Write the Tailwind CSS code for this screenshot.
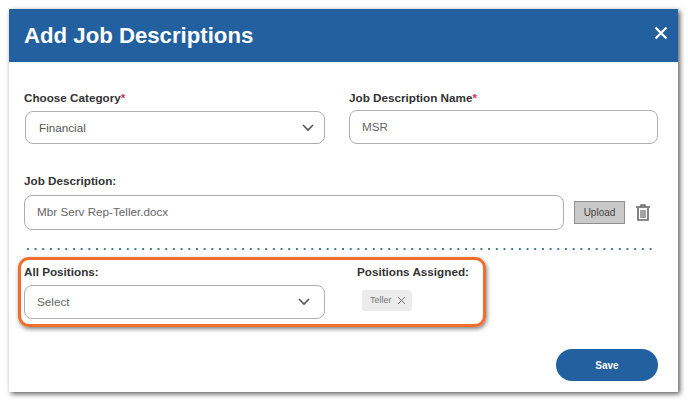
<!DOCTYPE html>
<html>
<head>
<script src="https://cdn.jsdelivr.net/npm/@tailwindcss/browser@4"></script>
</head>
<body class="bg-white font-['Liberation_Sans',Arial,sans-serif]">
<div class="w-[688px] h-[402px] pt-[9px] pl-[9px] overflow-hidden">
  <div class="relative w-[669px] h-[383px] bg-white flex flex-col shadow-[2px_2px_5px_rgba(0,0,0,0.65)]">
    <header class="h-[53px] shrink-0 bg-[#22609f] flex items-center justify-between pl-[15px] pr-[10px]">
      <h1 class="text-[22.2px] leading-[28px] font-bold text-white">Add Job Descriptions</h1>
      <svg class="w-[14px] h-[14px] mb-[5px]" viewBox="0 0 14 14" fill="none" stroke="#fff" stroke-width="2.2"><path d="M1.5 1.5l11 11M12.5 1.5l-11 11"/></svg>
    </header>
    <div class="flex-1 flex flex-col pl-[15px] pr-[20px]">
      <div class="flex mt-[29px]">
        <div class="w-[325px]">
          <label class="block text-[11.7px] leading-[14px] font-bold text-[#333] h-[20px]">Choose Category<span class="text-[#e0304a]">*</span></label>
          <div class="ml-[1px] w-[300px] h-[33px] border border-[#aeaeae] rounded-[8px] flex items-center justify-between pl-[13px] pr-[10px]">
            <span class="text-[11.7px] text-[#555]">Financial</span>
            <svg class="w-[12px] h-[8px]" viewBox="0 0 12 8" fill="none" stroke="#555" stroke-width="1.6"><path d="M1 1l5 5 5-5"/></svg>
          </div>
        </div>
        <div class="flex-1 pl-[1px]">
          <label class="block text-[11.7px] leading-[14px] font-bold text-[#333] h-[19px]">Job Description Name<span class="text-[#e0304a]">*</span></label>
          <div class="w-[309px] h-[34px] border border-[#aeaeae] rounded-[8px] flex items-center pl-[12px]">
            <span class="text-[11.7px] text-[#666]">MSR</span>
          </div>
        </div>
      </div>
      <label class="block text-[11.7px] leading-[14px] font-bold text-[#333] mt-[30px] h-[21px]">Job Description:</label>
      <div class="flex items-center h-[35px]">
        <div class="w-[540px] h-[35px] border border-[#aeaeae] rounded-[8px] flex items-center pl-[12px]">
          <span class="text-[11.7px] text-[#666] -mt-[2px]">Mbr Serv Rep-Teller.docx</span>
        </div>
        <button class="ml-[10px] w-[51px] h-[23px] bg-[#c9c9c9] border border-[#8f8f8f] text-[10px] font-medium text-[#444] flex items-center justify-center">Upload</button>
        <svg class="ml-[11px] w-[14px] h-[17px]" viewBox="0 0 14 17" fill="none" stroke="#666" stroke-width="1.4"><path d="M0 3h14" stroke-width="1.6"/><path d="M5 2.5V1h4v1.500"/><path d="M2 4v12h10V4" stroke-width="1.600"/><path d="M5 6v8M7 6v8M9 6v8" stroke-width="1.200"/></svg>
      </div>
      <div class="mt-[18px] w-[630px] h-[2px] bg-[radial-gradient(circle,#3f7d92_0.9px,transparent_1.1px)] bg-[length:7.7px_2px]"></div>
      <div class="relative flex mt-[15px]">
        <div class="absolute -left-[6px] -top-[8px] w-[468px] h-[70px] border-[3px] border-[#f26c2a] rounded-[11px] shadow-[1px_2px_4px_rgba(0,0,0,0.5)] pointer-events-none"></div>
        <div class="w-[333px]">
          <label class="block text-[11.7px] leading-[14px] font-bold text-[#333] h-[20px]">All Positions:</label>
          <div class="w-[301px] h-[34px] border border-[#aeaeae] rounded-[8px] flex items-center justify-between pl-[12px] pr-[14px]">
            <span class="text-[11.7px] text-[#666]">Select</span>
            <svg class="w-[12px] h-[8px]" viewBox="0 0 12 8" fill="none" stroke="#555" stroke-width="1.6"><path d="M1 1l5 5 5-5"/></svg>
          </div>
        </div>
        <div>
          <label class="block text-[11.7px] leading-[14px] font-bold text-[#333] h-[25px]">Positions Assigned:</label>
          <div class="ml-[5px] w-[50px] h-[21px] bg-[#ececec] rounded-[3px] flex items-center pl-[8px] gap-[5px]">
            <span class="text-[9px] text-[#777]">Teller</span>
            <svg class="w-[9px] h-[9px]" viewBox="0 0 9 9" fill="none" stroke="#777" stroke-width="1"><path d="M1 1l7 7M8 1l-7 7"/></svg>
          </div>
        </div>
      </div>
      <div class="flex justify-end mt-[30px]">
        <button class="w-[102px] h-[32px] rounded-full bg-[#22609f] text-white text-[10px] font-bold">Save</button>
      </div>
    </div>
  </div>
</div>
</body>
</html>
